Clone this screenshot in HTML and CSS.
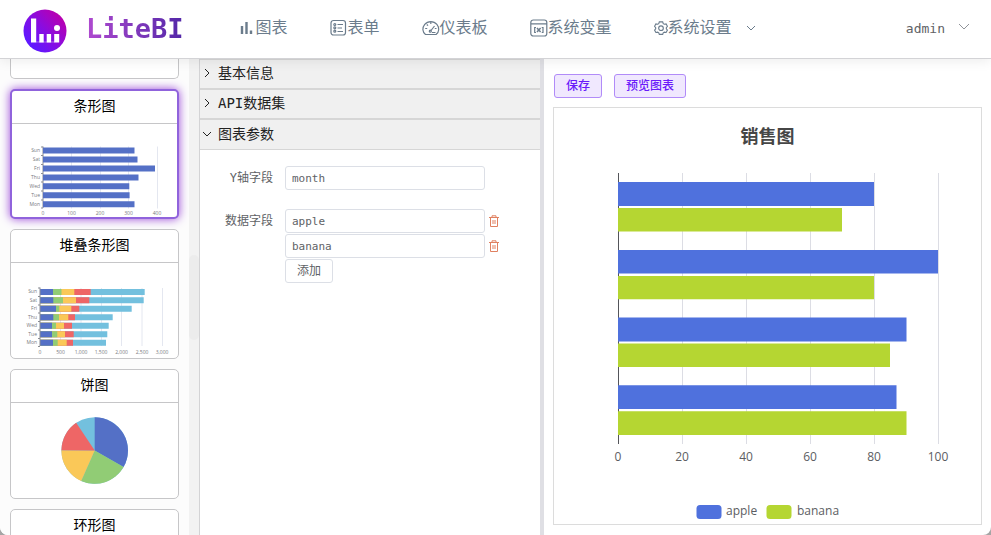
FILE: index.html
```html
<!DOCTYPE html>
<html lang="zh-CN">
<head>
<meta charset="utf-8">
<meta name="viewport" content="width=device-width, initial-scale=1">
<title>LiteBI</title>
<link rel="stylesheet" href="styles.css">
</head>
<body>
<div class="app">
  <header class="topbar">
    <a class="brand" href="#">
      <svg class="brand-logo" viewBox="0 0 44 44" aria-hidden="true">
        <defs><linearGradient id="logo" x1="0.15" y1="0.8" x2="0.85" y2="0.15"><stop offset="0" stop-color="#5f18ff"/><stop offset="0.5" stop-color="#8a0ce0"/><stop offset="1" stop-color="#b800b0"/></linearGradient></defs>
        <circle cx="22" cy="22" r="21.5" fill="url(#logo)"/>
        <path d="M8 9.500h5.200v24H8zM16.300 25h4.400v8.500h-4.400zM23.700 25h4.400v8.500h-4.400zM31.200 25h5v8.500h-5z" fill="#fff"/>
        <path d="M13 32.500h19v1H13z" fill="#fff" opacity=".35"/>
        <circle cx="34" cy="19" r="3" fill="#fff"/>
      </svg>
      <span class="brand-name">LiteBI</span>
    </a>
    <nav class="nav">
      <a href="#"><svg class="ico ico-16" viewBox="0 0 16 16"><path d="M2 14V6M6.500 14V2M11 14v-3.500" stroke-width="2.400"/></svg>图表</a>
      <a href="#"><svg class="ico ico-18" viewBox="0 0 18 18"><rect x="1" y="1.500" width="14.500" height="14.500" rx="2.500"/><circle cx="4.800" cy="5.500" r="1"/><circle cx="4.800" cy="8.800" r="1"/><circle cx="4.800" cy="12.200" r="1"/><path d="M7.500 5.500H13M7.500 9H12M7.500 12.500H13"/></svg>表单</a>
      <a href="#"><svg class="ico ico-18" viewBox="0 0 18 18"><path d="M3.500 15.500C.3 13 0 8.700 2.700 5.400c3.200-3.800 9-3.800 12.200 0 2.700 3.300 2.400 7.600-.8 10.100z"/><path d="M8.800 3v2M3.200 9.500h2M12.800 9.500h1.700M4.800 5.500l1.200 1.200M9 11.500l3.500-4.500M10 13.500h3.500"/><circle cx="8.300" cy="12.200" r="1"/></svg>仪表板</a>
      <a href="#"><svg class="ico ico-18" viewBox="0 0 18 18"><rect x=".8" y="1" width="16" height="16" rx="2.500"/><path d="M1 4.800h16M6 8.500H4.700v5H6M11.700 8.500H13v5h-1.300"/><path d="M7 9l3.600 4M10.600 9L7 13" stroke-width="1.500"/></svg>系统变量</a>
      <a href="#"><svg class="ico ico-14" viewBox="0 0 15 15"><path d="M5.700 1h3.600l.6 1.800 1.200.7 1.900-.4 1.400 2.600-1.200 1.400v1.300l1.200 1.400-1.400 2.500-1.900-.4-1.200.7-.6 1.700H5.700l-.6-1.700-1.200-.7-1.900.4L.6 9.800l1.200-1.400V7.100L.6 5.700 2 3.100l1.900.4 1.200-.7z"/><circle cx="7.500" cy="7.700" r="2.500"/></svg>系统设置<svg class="ico nav-arrow" viewBox="0 0 10 10"><path d="M1 3l4 4 4-4"/></svg></a>
    </nav>
    <button class="user" type="button">admin<svg class="ico user-arrow" viewBox="0 0 12 12"><path d="M1 2l5 5 5-5"/></svg></button>
  </header>

  <main class="work">
    <aside class="gallery">
      <div class="cards">
        <article class="card card-clipped"></article>
        <article class="card card-active">
          <h3>条形图</h3>
          <svg viewBox="12 124 165 93">
            <path class="grid" d="M71.500 146.500v62M100.500 146.500v62M128.500 146.500v62M157.500 146.500v62"/>
            <path class="axis" d="M43 146.500V208M41 147h2M41 155.500h2M41 164.500h2M41 173.500h2M41 182h2M41 191h2M41 200h2M41 208h2"/>
            <path fill="#5470c6" d="M43 147.500h91.500v6H43zM43 156.500h94.500v6H43zM43 165.500h112v6H43zM43 174.500h95.500v6H43zM43 183.300h86.300v6H43zM43 192.300h86.600v6H43zM43 201.300h91.500v6H43z"/>
            <g class="tick end"><text x="40" y="152">Sun</text><text x="40" y="161">Sat</text><text x="40" y="170">Fri</text><text x="40" y="179">Thu</text><text x="40" y="188">Wed</text><text x="40" y="197">Tue</text><text x="40" y="206">Mon</text></g>
            <g class="tick mid"><text x="43" y="215">0</text><text x="71.500" y="215">100</text><text x="100" y="215">200</text><text x="128.500" y="215">300</text><text x="157" y="215">400</text></g>
          </svg>
        </article>
        <article class="card">
          <h3>堆叠条形图</h3>
          <svg viewBox="11 263 167 95">
            <path class="grid" d="M60.500 288v58M81 288v58M101.500 288v58M121.500 288v58M142 288v58M162.500 288v58"/>
            <path fill="#73c0de" d="M40 289h104.700v6H40zM40 297.300h103.700v6H40zM40 305.800h91.700v6H40zM40 314.300h72.700v6H40zM40 322.800h68.700v6H40zM40 331.200h67.300v6H40zM40 339.700h66v6H40z"/>
            <path fill="#ee6666" d="M40 289h50.700v6H40zM40 297.300h49.300v6H40zM40 305.800h39.300v6H40zM40 314.300h35v6H40zM40 322.800h32v6H40zM40 331.200h33.700v6H40zM40 339.700h33v6H40z"/>
            <path fill="#fac858" d="M40 289h34.300v6H40zM40 297.300h36v6H40zM40 305.800h31.300v6H40zM40 314.300h28.300v6H40zM40 322.800h24v6H40zM40 331.200h25v6H40zM40 339.700h26.700v6H40z"/>
            <path fill="#91cc75" d="M40 289h21.500v6H40zM40 297.300h23v6H40zM40 305.800h19.300v6H40zM40 314.300h19v6H40zM40 322.800h16v6H40zM40 331.200h17.300v6H40zM40 339.700h17.700v6H40z"/>
            <path fill="#5470c6" d="M40 289h13v6H40zM40 297.300h13.300v6H40zM40 305.800h16v6H40zM40 314.300h13.300v6H40zM40 322.800h12v6H40zM40 331.200h12v6H40zM40 339.700h13v6H40z"/>
            <path class="axis" d="M40 287.500V346M38 288h2M38 296.500h2M38 305h2M38 313h2M38 321.500h2M38 330h2M38 338.500h2M38 346.500h2"/>
            <g class="tick end"><text x="37" y="293">Sun</text><text x="37" y="302">Sat</text><text x="37" y="310">Fri</text><text x="37" y="319">Thu</text><text x="37" y="327">Wed</text><text x="37" y="336">Tue</text><text x="37" y="344">Mon</text></g>
            <g class="tick mid"><text x="40" y="354">0</text><text x="60.500" y="354">500</text><text x="81" y="354">1,000</text><text x="101" y="354">1,500</text><text x="121.500" y="354">2,000</text><text x="142" y="354">2,500</text><text x="162" y="354">3,000</text></g>
          </svg>
        </article>
        <article class="card">
          <h3>饼图</h3>
          <svg viewBox="11 403 167 95">
            <circle cx="94.700" cy="450.500" r="33.300" fill="#73c0de"/>
            <path fill="#5470c6" d="M94.700 450.500V417.200A33.300 33.300 0 0 1 123.600 467z"/>
            <path fill="#91cc75" d="M94.700 450.500L123.600 467A33.300 33.300 0 0 1 81.200 481z"/>
            <path fill="#fac858" d="M94.700 450.500L81.200 481A33.300 33.300 0 0 1 61.400 450.200z"/>
            <path fill="#ee6666" d="M94.700 450.500L61.400 450.200A33.300 33.300 0 0 1 76.200 422.800z"/>
          </svg>
        </article>
        <article class="card">
          <h3>环形图</h3>
        </article>
      </div>
      <div class="scroll"><div class="scroll-thumb"></div></div>
    </aside>

    <section class="settings">
      <button class="fold" type="button"><svg class="ico fold-arrow" viewBox="0 0 12 12"><path d="M4 2L8 6 4 10"/></svg>基本信息</button>
      <button class="fold" type="button"><svg class="ico fold-arrow" viewBox="0 0 12 12"><path d="M4 2L8 6 4 10"/></svg>API数据集</button>
      <button class="fold fold-open" type="button" aria-expanded="true"><svg class="ico fold-arrow" viewBox="0 0 12 12"><path d="M2 4l4 4 4-4"/></svg>图表参数</button>
      <form class="params">
        <label for="yfield">Y轴字段</label>
        <div class="fields"><input id="yfield" type="text" value="month"></div>
        <label for="data1">数据字段</label>
        <div class="fields">
          <div class="field-row"><input id="data1" type="text" value="apple"><button class="trash" type="button" aria-label="删除 apple"><svg class="ico" viewBox="0 0 10 12"><path d="M0 2.500h10M3 2.500V.8h4v1.700M1.500 2.500v9h7v-9M4 5v4M6 5v4"/></svg></button></div>
          <div class="field-row"><input type="text" value="banana" aria-label="数据字段 2"><button class="trash" type="button" aria-label="删除 banana"><svg class="ico" viewBox="0 0 10 12"><path d="M0 2.500h10M3 2.500V.8h4v1.700M1.500 2.500v9h7v-9M4 5v4M6 5v4"/></svg></button></div>
          <button class="btn" type="button">添加</button>
        </div>
      </form>
    </section>

    <section class="preview">
      <div class="actions">
        <button class="btn btn-primary" type="button">保存</button>
        <button class="btn btn-primary" type="button">预览图表</button>
      </div>
      <div class="chart">
        <svg viewBox="554 108 427 416">
          <text class="chart-title" x="767.500" y="143">销售图</text>
          <path class="chart-grid" d="M682.500 173v271M746.500 173v271M810.500 173v271M874.500 173v271M938.500 173v271"/>
          <path class="chart-axis" d="M618.500 173v271"/>
          <g class="apple"><path d="M618 182h256v24H618z"/><path d="M618 250h320v23.500H618z"/><path d="M618 317.500h288.500v24H618z"/><path d="M618 385.300h278.500v23.700H618z"/></g>
          <g class="banana"><path d="M618 208h224v23.500H618z"/><path d="M618 276h256v23.300H618z"/><path d="M618 343.500h272v23.500H618z"/><path d="M618 411.300h288.500v23.700H618z"/></g>
          <g class="chart-label mid"><text x="618" y="461">0</text><text x="682" y="461">20</text><text x="746" y="461">40</text><text x="810" y="461">60</text><text x="874" y="461">80</text><text x="938" y="461">100</text></g>
          <rect class="apple" x="696.500" y="505" width="25" height="14" rx="3.500"/><text class="chart-label" x="726" y="515">apple</text>
          <rect class="banana" x="766.500" y="505" width="25" height="14" rx="3.500"/><text class="chart-label" x="797" y="515">banana</text>
        </svg>
      </div>
    </section>
  </main>
</div>
</body>
</html>
```
FILE: styles.css
```css
* { box-sizing: border-box; }
html { background: #a5a5a5; }
body { margin: 0; color: #606266; font: 12px "DejaVu Sans Mono", "Noto Sans CJK SC", monospace; }
button { font: inherit; color: inherit; cursor: pointer; }
a { color: inherit; text-decoration: none; }
svg { display: block; }
.ico { fill: none; stroke: currentColor; flex: none; }

.app { display: flex; flex-direction: column; height: 100vh; overflow: hidden; background: #fff; border-radius: 0 0 8px 8px; }

.topbar { position: relative; z-index: 1; display: flex; align-items: center; flex: none; height: 59px; padding: 0 21px 0 23px; border-bottom: 1px solid #d3d3d6; box-shadow: 0 2px 12px rgba(0, 0, 0, .08); background: #fff; }
.brand { display: flex; align-items: center; gap: 19px; margin-right: 56px; padding-top: 3px; }
.brand-logo { width: 44px; height: 44px; }
.brand-name { padding-bottom: 4px; font-size: 27px; font-weight: 700; line-height: 32px; color: transparent; background: linear-gradient(90deg, #b04ad0, #5227a8); background-clip: text; -webkit-background-clip: text; }
.nav { display: flex; gap: 42px; padding-bottom: 2px; font-size: 16px; line-height: 24px; color: #6b7c8c; }
.nav a { display: flex; align-items: center; white-space: nowrap; }
.nav .ico { stroke-width: 1.2; }
.ico-14 { width: 14px; height: 14px; }
.ico-16 { width: 16px; height: 16px; }
.ico-18 { width: 18px; height: 18px; }
.nav .nav-arrow { width: 10px; height: 10px; margin-left: 14px; stroke-width: 1; }
.user { display: flex; align-items: center; gap: 13px; margin-left: auto; padding: 0 0 2px; border: 0; background: none; font-size: 13px; }
.user-arrow { width: 12px; height: 12px; color: #909399; }

.work { display: flex; flex: 1; min-height: 0; }

.gallery { display: flex; flex: none; width: 199px; background: #fcfcfc; }
.cards { display: flex; flex: 1; flex-direction: column; gap: 10px; padding: 0 10px; overflow: hidden; }
.card { flex: none; height: 130px; border: 1px solid #c6c6c8; border-radius: 5px; background: #fff; overflow: hidden; }
.card-clipped { height: 20px; border-top: 0; border-radius: 0 0 5px 5px; }
.card-active { border: 2px solid #9063dc; box-shadow: 0 0 10px #9945d8; }
.card h3 { margin: 0; padding-bottom: 2px; border-bottom: 1px solid #c6c6c8; color: #000; font-size: 14px; font-weight: 400; line-height: 30px; text-align: center; }
.card svg { width: 100%; }
.scroll { flex: none; width: 10px; padding-top: 196px; background: #f2f2f2; }
.scroll-thumb { height: 85px; border-radius: 5px; background: #ececec; }

.grid { fill: none; stroke: #e4e7f0; }
.axis { fill: none; stroke: #8a8d94; }
.tick { fill: #777a80; font: 5px "Open Sans", sans-serif; }
.end { text-anchor: end; }
.mid { text-anchor: middle; }

.settings { flex: none; width: 345px; border-left: 1px solid #d3d3d5; border-right: 4px solid #dfdfe4; }
.fold { display: flex; align-items: center; gap: 5px; width: 100%; height: 30px; padding: 0 1px 2px; border: solid #d6d6d6; border-width: 1px 0; background: #f0f0f0; color: #222; font-size: 14px; line-height: 20px; text-align: left; }
.fold-open { height: 31px; }
.fold-arrow { width: 12px; height: 12px; }
.params { display: grid; grid-template-columns: 73px 1fr; gap: 19px 12px; padding-top: 16px; }
.params label { line-height: 24px; text-align: right; }
.fields { display: flex; flex-direction: column; align-items: flex-start; gap: 1px; }
.field-row { display: flex; align-items: center; gap: 4px; }
.fields input { width: 200px; height: 24px; padding: 0 6px; border: 1px solid #dcdfe6; border-radius: 3px; background: #fff; color: #606266; font: 11px "DejaVu Sans Mono", monospace; }
.trash { padding: 0; border: 0; background: none; color: #e08060; }
.trash svg { width: 10px; height: 12px; }
.btn { height: 24px; padding: 0 11px; border: 1px solid #dcdfe6; border-radius: 3px; background: #fff; line-height: 20px; }
.btn-primary { border-color: #b18bf8; background: #f0e8fe; color: #6a1bfa; font-weight: 500; }

.preview { flex: 1; min-width: 0; padding: 15px 9px; }
.actions { display: flex; gap: 12px; padding-left: 1px; }
.chart { margin-top: 9px; border: 1px solid #dcdcdc; }
.chart svg { width: 100%; }
.chart-title { fill: #464646; font: 700 18px "Noto Sans CJK SC", sans-serif; text-anchor: middle; }
.chart-grid { stroke: #dcdde4; }
.chart-axis { stroke: #54555a; }
.chart-label { fill: #5c5d62; font: 12px "Open Sans", sans-serif; }
.apple { fill: #4f71dd; }
.banana { fill: #b5d632; }
```
